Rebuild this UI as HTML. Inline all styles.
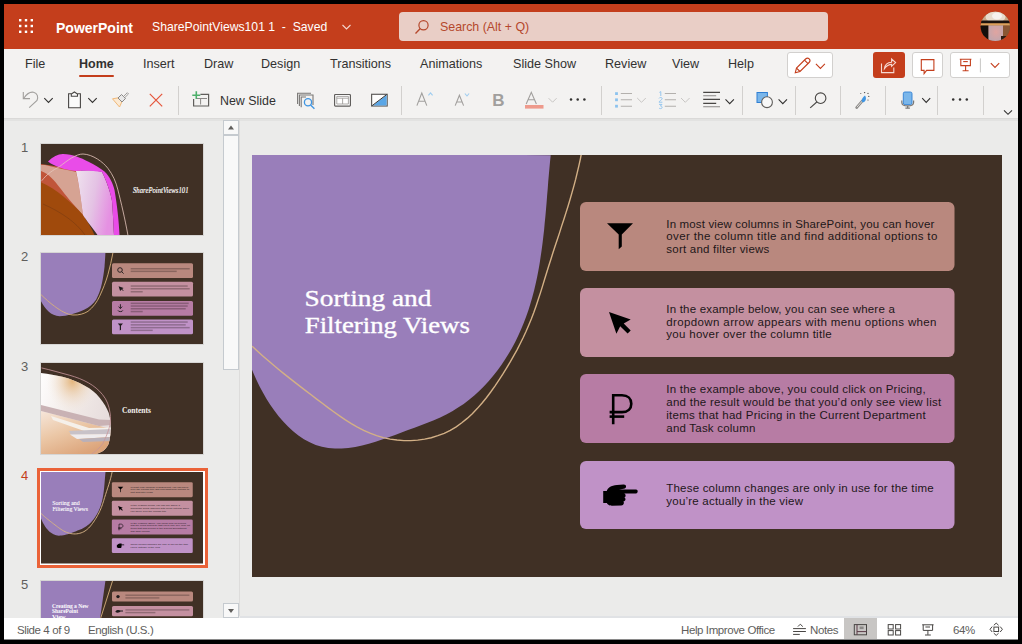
<!DOCTYPE html>
<html><head><meta charset="utf-8">
<style>
*{margin:0;padding:0;box-sizing:border-box}
html,body{width:1022px;height:644px;overflow:hidden;background:#000}
body{position:relative;font-family:"Liberation Sans",sans-serif}
.a{position:absolute}
.t{position:absolute;white-space:pre;line-height:1}
svg{overflow:hidden}
#app{position:absolute;left:4px;top:4px;width:1014px;height:636px;background:#ebebea;overflow:hidden}
#hdr{left:4px;top:4px;width:1014px;height:45px;background:#c43e1c}
#rib{left:4px;top:49px;width:1014px;height:69px;background:#f3f2f1}
.tab{font-size:12.6px;color:#323130;top:58px}
.btn{position:absolute;background:#fff;border:1px solid #d2d0ce;border-radius:3px}
.div{position:absolute;width:1px;background:#d2d0ce;top:86px;height:29px}
.st{font-size:11.5px;color:#605e5c;top:624.8px;letter-spacing:-0.4px}
.num{font-size:13px;color:#605e5c}
</style></head><body>
<div id="app"></div>
<div id="hdr" class="a"></div>
<svg class="a" style="left:18px;top:18px" width="16" height="16" viewBox="0 0 16 16">
<g fill="#fff"><rect x="1" y="1" width="2.4" height="2.4"/><rect x="6.8" y="1" width="2.4" height="2.4"/><rect x="12.6" y="1" width="2.4" height="2.4"/>
<rect x="1" y="6.8" width="2.4" height="2.4"/><rect x="6.8" y="6.8" width="2.4" height="2.4"/><rect x="12.6" y="6.8" width="2.4" height="2.4"/>
<rect x="1" y="12.6" width="2.4" height="2.4"/><rect x="6.8" y="12.6" width="2.4" height="2.4"/><rect x="12.6" y="12.6" width="2.4" height="2.4"/></g></svg>
<div class="t" style="left:56px;top:21px;font-size:14px;font-weight:700;color:#fff">PowerPoint</div>
<div class="t" style="left:152px;top:21px;font-size:12.2px;color:#fff">SharePointViews101 1  -  Saved</div>
<svg class="a" style="left:341px;top:23px" width="11" height="8" viewBox="0 0 11 8"><path d="M1.5 2 L5.5 6 L9.5 2" stroke="#f3d6cf" stroke-width="1.1" fill="none"/></svg>
<div class="a" style="left:399px;top:12px;width:429px;height:29px;background:#e9cec6;border-radius:4px"></div>
<svg class="a" style="left:414px;top:19px" width="16" height="16" viewBox="0 0 16 16"><circle cx="9.5" cy="6.2" r="4.6" stroke="#b5482c" stroke-width="1.2" fill="none"/><path d="M6.3 9.5 L1.5 14.5" stroke="#b5482c" stroke-width="1.3"/></svg>
<div class="t" style="left:440px;top:21px;font-size:12.4px;color:#b5482c">Search (Alt + Q)</div>
<svg class="a" style="left:980px;top:11px;filter:blur(0.35px)" width="31" height="31" viewBox="0 0 31 31">
<defs><clipPath id="av"><circle cx="15.3" cy="15.4" r="14.7"/></clipPath>
<radialGradient id="avf" cx="0.5" cy="0.4" r="0.6"><stop offset="0" stop-color="#e0a4a0"/><stop offset="1" stop-color="#bfa6ae"/></radialGradient></defs>
<g clip-path="url(#av)">
<rect width="31" height="31" fill="#7a4e30"/>
<rect x="0" y="0" width="31" height="10" fill="#c9a887"/>
<ellipse cx="15.5" cy="6" rx="10" ry="6" fill="#e8dccd"/>
<ellipse cx="17" cy="5" rx="5" ry="3.5" fill="#f6f2ee"/>
<rect x="0" y="9.5" width="31" height="3" fill="#1a120e"/>
<rect x="0" y="12.3" width="31" height="2.4" fill="#dca15c"/>
<rect x="0" y="14.5" width="8.5" height="17" fill="#140e0b"/>
<path d="M8.5,14.5 H23.5 V31 H8.5 Z" fill="url(#avf)"/>
<rect x="23" y="14.5" width="8" height="12" fill="#8a5634"/>
<rect x="21" y="25" width="10" height="6" fill="#2a1a12"/>
</g></svg>
<div id="rib" class="a"></div>
<div class="t tab" style="left:25px">File</div>
<div class="t tab" style="left:79px;font-weight:700;font-size:12.5px">Home</div>
<div class="a" style="left:79px;top:74.5px;width:35px;height:2.5px;background:#c43e1c;border-radius:1px"></div>
<div class="t tab" style="left:143px">Insert</div>
<div class="t tab" style="left:204px">Draw</div>
<div class="t tab" style="left:261px">Design</div>
<div class="t tab" style="left:330px">Transitions</div>
<div class="t tab" style="left:420px">Animations</div>
<div class="t tab" style="left:513px">Slide Show</div>
<div class="t tab" style="left:605px">Review</div>
<div class="t tab" style="left:672px">View</div>
<div class="t tab" style="left:728px">Help</div>
<div class="btn" style="left:787px;top:52px;width:46px;height:26px"></div>
<div class="a" style="left:873px;top:52px;width:32px;height:26px;background:#c43e1c;border-radius:3px"></div>
<div class="btn" style="left:912px;top:52px;width:31px;height:26px"></div>
<div class="btn" style="left:950px;top:52px;width:60px;height:26px"></div>
<div class="div" style="left:178px"></div>
<div class="div" style="left:401px"></div>
<div class="div" style="left:601px"></div>
<div class="div" style="left:742px"></div>
<div class="div" style="left:795px"></div>
<div class="div" style="left:840px"></div>
<div class="div" style="left:885px"></div>
<div class="div" style="left:937px"></div>
<div class="div" style="left:983px"></div>
<div class="t" style="left:220px;top:95px;font-size:12.4px;color:#323130">New Slide</div>
<svg class="a" style="left:0;top:0" width="1022" height="644" viewBox="0 0 1022 644">
<!-- undo (disabled) -->
<g fill="none" stroke="#a19f9d" stroke-width="1.1">
<path d="M23.3,92 V98.6 H30"/>
<path d="M23.8,98.2 C27,93.5 30.5,91.6 33.5,92.2 C37.5,93 38.5,97 37,100.5 L29.2,107.6"/>
</g>
<!-- chevrons dark -->
<g fill="none" stroke="#323130" stroke-width="1.1">
<path d="M44.3,98.2 L48.5,102.4 L52.7,98.2"/>
<path d="M88.3,98.2 L92.5,102.4 L96.7,98.2"/>
<path d="M725.5,99.4 L729.7,103.6 L733.9,99.4"/>
<path d="M778.6,99.4 L782.8,103.6 L787,99.4"/>
<path d="M922.2,98.2 L926.2,102.4 L930.2,98.2"/>
<path d="M1004,110.3 L1008,114.3 L1012,110.3"/>
</g>
<!-- clipboard -->
<g fill="none" stroke="#484644" stroke-width="1.1">
<path d="M71.5,93.8 H68.6 V107.8 H80.4 V93.8 H77.5" fill="#fafafa"/>
<path d="M71.3,96.3 V94 L74.4,92 L77.5,94 V96.3 Z" fill="#fafafa"/>
</g>
<!-- format painter -->
<g fill="none" stroke-width="1">
<path d="M112.5,98.8 L118.5,97.8 L122,101.4 L119.5,107 Z" stroke="#f0b97a" fill="#fbe9d2"/>
<path d="M118,98 L121.5,94.5 L125.5,98.5 L122,102 Z" stroke="#8a8886" fill="#e8e8e8"/>
<path d="M123.5,96.5 L127.3,92.7 L128.5,93.9 L124.7,97.7" stroke="#a19f9d"/>
</g>
<!-- delete X -->
<g stroke="#e5553b" stroke-width="1.2"><path d="M149.8,93.8 L162.2,106.3 M162.2,93.8 L149.8,106.3"/></g>
<!-- new slide -->
<g fill="none" stroke="#605e5c" stroke-width="1.2">
<path d="M193.6,99 V106 H208.6 V94.4 H200.4"/>
<path d="M196,98.5 H207 M200.6,98.5 V104.5" stroke="#8a8886" stroke-width="1"/>
</g>
<path d="M196.3,91.2 V99 M192.3,95.2 H200.3" stroke="#4caf6a" stroke-width="1.6"/>
<!-- reuse slides -->
<g fill="none" stroke="#797775" stroke-width="1.1">
<path d="M297.6,104 V93.2 H311"/>
<path d="M299.4,106 V95 H313 V105"/>
<path d="M301.2,107.3 V97 H306"/>
</g>
<g fill="none" stroke="#3f95e2" stroke-width="1.3"><circle cx="308" cy="102.3" r="3.6"/><path d="M310.6,105 L314.4,108.8"/></g>
<!-- layout -->
<rect x="334.6" y="94.5" width="15.8" height="11.6" rx="0.8" fill="#fff" stroke="#605e5c" stroke-width="1.2"/>
<path d="M336.8,96.4 H348.4 V104 H336.8 Z M336.8,98.2 H348.4 M342.6,98.2 V104" stroke="#a19f9d" stroke-width="0.9" fill="none"/>
<!-- format background -->
<rect x="371.6" y="94.3" width="15.6" height="11.7" fill="#fdfdfd" stroke="#605e5c" stroke-width="1.2"/>
<path d="M386.6,95 V105.4 H373 Z" fill="#5aa6e6"/>
<path d="M372.2,105.6 L386.6,94.6" stroke="#323130" stroke-width="1"/>
<!-- font size -->
<g fill="none" stroke="#a19f9d" stroke-width="1.1">
<path d="M416.9,105.6 L421.8,93 L426.8,105.6 M418.6,101.2 H425"/>
<path d="M455.2,105.6 L459.4,95.3 L463.6,105.6 M456.7,102 H462.2"/>
</g>
<g fill="none" stroke="#9fcdf0" stroke-width="1.1">
<path d="M428.4,95.4 L430.5,92.8 L432.6,95.4"/>
<path d="M464.9,93.5 L467,96 L469.1,93.5"/>
</g>
<!-- bold B -->
<text x="492.3" y="105.7" font-family="Liberation Sans" font-weight="700" font-size="17" fill="#a19f9d">B</text>
<!-- font color -->
<path d="M526.2,104 L531.3,92.3 L536.4,104 M527.9,99.8 H534.7" fill="none" stroke="#a19f9d" stroke-width="1.1"/>
<rect x="525" y="105" width="18.5" height="3.6" fill="#ee9a8c"/>
<path d="M548.6,98.2 L552.6,102.2 L556.6,98.2" fill="none" stroke="#c8c6c4" stroke-width="1"/>
<!-- more dots -->
<g fill="#323130"><circle cx="571" cy="99.6" r="1.25"/><circle cx="577.7" cy="99.6" r="1.25"/><circle cx="584.4" cy="99.6" r="1.25"/></g>
<!-- bullets -->
<g fill="#8cc2ee"><rect x="615.1" y="92.2" width="2.8" height="2.8"/><rect x="615.1" y="98.4" width="2.8" height="2.8"/><rect x="615.1" y="104.8" width="2.8" height="2.8"/></g>
<g stroke="#b3b0ad" stroke-width="1.1"><path d="M620.8,93.5 H632 M620.8,99.7 H632 M620.8,106.2 H632"/><path d="M664.8,93.5 H676 M664.8,99.7 H676 M664.8,106.2 H676"/></g>
<g fill="none" stroke="#c8c6c4" stroke-width="1"><path d="M637.2,98 L641.5,102.3 L645.8,98"/><path d="M681,98 L685.3,102.3 L689.6,98"/></g>
<g fill="none" stroke="#8cc2ee" stroke-width="0.9"><path d="M659.4,92.4 L660.8,91.6 V96"/><path d="M659,98.4 C659.4,97.2 662.2,97.2 662.2,98.6 C662.2,99.8 659,101 659,102.2 H662.4"/><path d="M659,104.4 H662 L660.4,106 C662.6,106 662.8,108.6 660.6,108.6 C659.8,108.6 659.2,108.3 659,108"/></g>
<!-- align -->
<g stroke="#484644" stroke-width="1.1"><path d="M703.2,92.4 H720 M703.2,99.4 H720 M703.2,103.4 H716.2"/></g>
<g stroke="#8a8886" stroke-width="1.1"><path d="M703.2,95.8 H716.2 M703.2,106.8 H720"/></g>
<!-- shapes -->
<rect x="757" y="92.5" width="10.4" height="10" fill="#7ab6ea" stroke="#2f7fd4" stroke-width="1"/>
<circle cx="767" cy="102.2" r="5.4" fill="#f8f8f8" stroke="#605e5c" stroke-width="1.1"/>
<!-- find -->
<g fill="none" stroke="#484644" stroke-width="1.1"><circle cx="820.6" cy="98.2" r="5.3"/><path d="M816.8,102 L810.2,107.8"/></g>
<!-- designer -->
<path d="M856.6,107.6 L862.6,100.6" stroke="#8a8886" stroke-width="2.6" stroke-linecap="round" fill="none"/>
<path d="M856.9,107.2 L862.4,100.9" stroke="#e8e6e4" stroke-width="0.9" fill="none"/>
<path d="M861.8,101.6 C861,99.4 863.2,96.8 865,95.4 C866.4,97.4 866.4,100.2 864.2,102 C863.3,102.6 862.3,102.3 861.8,101.6 Z" fill="#3f95e2"/>
<g fill="#484644"><circle cx="864.6" cy="92.6" r="0.7"/><circle cx="868" cy="93.4" r="0.6"/><circle cx="868.8" cy="96.4" r="0.6"/><circle cx="868" cy="100" r="0.6"/><circle cx="860.8" cy="93.4" r="0.5"/></g>
<!-- dictate -->
<rect x="903.3" y="92" width="8.7" height="12.6" rx="1.6" fill="#7ab6ea" stroke="#2f7fd4" stroke-width="0.9"/>
<path d="M901.8,100.6 V102.4 C901.8,104.8 903.6,105.9 907.65,105.9 C911.7,105.9 913.6,104.8 913.6,102.4 V100.6" fill="none" stroke="#797775" stroke-width="1.2"/>
<path d="M907.65,105.9 V108.2 M905.4,108.2 H909.9" stroke="#797775" stroke-width="1.2"/>
<g fill="#323130"><circle cx="953.2" cy="99.5" r="1.25"/><circle cx="960" cy="99.5" r="1.25"/><circle cx="966.8" cy="99.5" r="1.25"/></g>
</svg>


<div class="a" style="left:4px;top:118px;width:1014px;height:1px;background:#dad9d8"></div><div class="a" style="left:4px;top:119px;width:1014px;height:1.5px;background:#e2e2e1"></div>
<svg id="mainslide" class="a" style="left:252px;top:155px" width="750" height="422" viewBox="0 0 750 422">
<g id="s4">
<rect width="750" height="422" fill="#403025"/>
<path d="M-2,-2 L298.7,0.2 L298.0,6.9 L297.4,13.6 L296.8,20.3 L296.2,27.1 L295.7,33.9 L295.1,40.7 L294.6,47.5 L294.0,54.4 L293.4,61.2 L292.7,68.0 L292.1,74.9 L291.3,81.7 L290.5,88.5 L289.6,95.3 L288.6,102.1 L287.6,108.8 L286.4,115.6 L285.1,122.3 L283.6,129.0 L282.1,135.6 L280.3,142.2 L278.4,148.8 L276.4,155.3 L274.1,161.7 L271.7,168.1 L269.0,174.5 L266.2,180.7 L263.2,186.9 L260.0,192.9 L256.6,198.8 L253.0,204.6 L249.2,210.3 L245.2,215.8 L241.0,221.1 L236.6,226.3 L232.0,231.2 L227.2,236.0 L222.3,240.5 L217.1,244.8 L211.7,248.9 L206.1,252.6 L200.3,256.2 L194.3,259.4 L188.2,262.4 L181.9,265.2 L175.5,267.8 L169.0,270.3 L162.5,272.8 L156.0,275.1 L149.5,277.5 L143.1,280.0 L136.6,282.3 L130.1,284.6 L123.6,286.8 L116.9,288.8 L110.1,290.5 L103.3,291.9 L96.4,292.9 L89.6,293.4 L82.9,293.5 L76.3,292.9 L69.9,291.8 L63.7,289.9 L57.7,287.3 L51.9,284.2 L46.4,280.5 L41.1,276.2 L36.0,271.6 L31.2,266.6 L26.6,261.2 L22.3,255.6 L18.2,249.7 L14.4,243.7 L10.9,237.6 L7.6,231.5 L4.6,225.3 L1.9,219.2 L-0.6,213.3 L-2.7,207.5 L-2,207.5 Z" fill="#997eba"/>
<rect x="328" y="47" width="374.5" height="69" rx="6" fill="#b9887e"/>
<rect x="328" y="133" width="374.5" height="69" rx="6" fill="#c490a0"/>
<rect x="328" y="219" width="374.5" height="69" rx="6" fill="#b77ca4"/>
<rect x="328" y="306" width="374.5" height="68" rx="6" fill="#c092c7"/>
<g font-family="Liberation Serif" font-size="23.4" fill="#fff" stroke="#fff" stroke-width="0.35">
<text x="52.5" y="151.2" textLength="127" lengthAdjust="spacingAndGlyphs">Sorting and</text>
<text x="52.8" y="178.4" textLength="165" lengthAdjust="spacingAndGlyphs">Filtering Views</text>
</g>
<g font-family="Liberation Sans" font-size="11.5" fill="#1e1719">
<text x="414.3" y="72.6" textLength="268" lengthAdjust="spacing">In most view columns in SharePoint, you can hover</text>
<text x="414.3" y="85.2" textLength="271" lengthAdjust="spacing">over the column title and find additional options to</text>
<text x="414.3" y="97.6" textLength="103" lengthAdjust="spacing">sort and filter views</text>
<text x="414.3" y="158.2" textLength="228.5" lengthAdjust="spacing">In the example below, you can see where a</text>
<text x="414.3" y="170.8" textLength="270.2" lengthAdjust="spacing">dropdown arrow appears with menu options when</text>
<text x="414.3" y="183.4" textLength="165.4" lengthAdjust="spacing">you hover over the column title</text>
<text x="414.3" y="238.4" textLength="259.3" lengthAdjust="spacing">In the example above, you could click on Pricing,</text>
<text x="414.3" y="251.1" textLength="274.9" lengthAdjust="spacing">and the result would be that you’d only see view list</text>
<text x="414.3" y="263.8" textLength="259.3" lengthAdjust="spacing">items that had Pricing in the Current Department</text>
<text x="414.3" y="276.5" textLength="89.1" lengthAdjust="spacing">and Task column</text>
<text x="414.3" y="337" textLength="267.3" lengthAdjust="spacing">These column changes are only in use for the time</text>
<text x="414.3" y="349.7" textLength="136.7" lengthAdjust="spacing">you’re actually in the view</text>
</g>
<g fill="#000">
<path d="M355,68.3 L381,68.3 L369.8,79.5 L369.8,91.5 L366.7,94.3 L366.7,79.5 Z"/>
<path d="M357,157 L378.7,164.4 L371.7,168.6 L378.7,175.6 L375.6,178.5 L368.2,171.2 L364.4,178.7 Z"/>
<path d="M351.2,336 h4 v12 h-4 Z M354.5,337 C355.5,332.5 359,330.5 365,330 L371.5,329.4 C374.8,329.2 375,333.2 371.8,333.8 L367,334.6 L384,334.6 C386.3,334.6 386.3,338.4 384,338.4 L372,338.4 C374.2,338.8 374.2,342.2 372,342.6 C374.2,343 374,346.2 371.3,346.6 C372.3,347.2 372.2,350.4 369.2,350.6 L360,350.7 C356.8,350.7 354.6,349 354.6,346.5 Z"/>
</g>
<g fill="none" stroke="#000" stroke-width="2.6">
<path d="M361.2,269.2 V240.3 H370 C376,240.3 379.3,243.8 379.3,248.7 C379.3,253.6 376,257.1 370,257.1 H357.6"/>
<path d="M357.6,261.6 H372.2"/>
</g>
</g>
<g stroke-width="1.4"><path id="goldp" d="M0.1,191.2 L5.3,196.0 L10.5,200.7 L15.8,205.3 L21.1,209.8 L26.4,214.2 L31.8,218.6 L37.2,222.9 L42.6,227.1 L48.1,231.4 L53.6,235.6 L59.1,239.8 L64.7,244.1 L70.3,248.3 L76.0,252.6 L81.7,256.8 L87.5,260.9 L93.4,264.9 L99.3,268.7 L105.4,272.2 L111.7,275.4 L118.0,278.2 L124.6,280.6 L131.3,282.6 L138.1,284.1 L145.0,285.0 L151.9,285.6 L158.8,285.6 L165.7,285.1 L172.6,284.1 L179.3,282.7 L185.8,280.7 L192.2,278.3 L198.3,275.3 L204.2,271.8 L209.8,267.8 L215.2,263.4 L220.3,258.7 L225.2,253.6 L229.9,248.3 L234.4,242.7 L238.7,237.0 L242.9,231.1 L246.9,225.2 L250.8,219.2 L254.5,213.2 L258.1,207.2 L261.5,201.2 L264.9,195.1 L268.0,189.0 L271.1,182.8 L274.0,176.5 L276.7,170.2 L279.3,163.9 L281.8,157.4 L284.1,150.9 L286.3,144.3 L288.5,137.6 L290.6,130.9 L292.6,124.2 L294.7,117.5 L296.8,110.8 L298.9,104.2 L301.0,97.5 L303.2,90.8 L305.4,84.2 L307.6,77.6 L309.7,70.9 L311.9,64.3 L314.0,57.6 L316.1,51.0 L318.1,44.3 L320.0,37.6 L321.9,30.9 L323.7,24.2 L325.3,17.4 L326.9,10.6 L328.4,3.8 L329.7,-3.1 L330.8,-10.1" fill="none" stroke="#d3b086"/></g>
</svg>

<!-- slide numbers -->
<div class="t num" style="left:21px;top:141px">1</div>
<div class="t num" style="left:21px;top:250px">2</div>
<div class="t num" style="left:21px;top:359.5px">3</div>
<div class="t num" style="left:21px;top:469px;color:#c43e1c">4</div>
<div class="t num" style="left:21px;top:578px">5</div>
<!-- scrollbar -->
<div class="a" style="left:239px;top:119px;width:1px;height:497px;background:#dddcdb"></div>
<div class="a" style="left:223px;top:119.5px;width:16px;height:15px;background:#f8f8f8;border:1px solid #c5cacf"></div>
<svg class="a" style="left:223px;top:119px" width="16" height="16"><path d="M5,10.5 L8,6.5 L11,10.5 Z" fill="#605e5c"/></svg>
<div class="a" style="left:223px;top:135px;width:16px;height:235px;background:#f8f8f8;border:1px solid #c5cacf"></div>
<div class="a" style="left:223px;top:603px;width:16px;height:15px;background:#f8f8f8;border:1px solid #c5cacf"></div>
<svg class="a" style="left:223px;top:602.5px" width="16" height="16"><path d="M5,6 L8,10 L11,6 Z" fill="#605e5c"/></svg>
<div id="thumbclip" class="a" style="left:0;top:119px;width:222px;height:499px;overflow:hidden">
<!-- thumb frames -->
<div class="a" style="left:40px;top:24px;width:164px;height:93px;border:1px solid #d6d5d4"></div>
<div class="a" style="left:40px;top:133.3px;width:164px;height:93px;border:1px solid #d6d5d4"></div>
<div class="a" style="left:40px;top:242.6px;width:164px;height:93px;border:1px solid #d6d5d4"></div>
<div class="a" style="left:37px;top:348.5px;width:171px;height:100.5px;border:3px solid #ea6238;background:#fff"></div>
<div class="a" style="left:40px;top:461px;width:164px;height:93px;border:1px solid #d6d5d4"></div>
<!-- thumb 1 -->
<svg class="a" style="left:41px;top:25px" width="162" height="91" viewBox="0 0 162 91">
<defs><linearGradient id="pk" x1="0" y1="0" x2="1" y2="0.3"><stop offset="0" stop-color="#efe2ee"/><stop offset="0.55" stop-color="#e4c2e4"/><stop offset="1" stop-color="#e590e2"/></linearGradient></defs>
<rect width="162" height="91" fill="#403025"/>
<path d="M0,20 L40,26 L44,75 L0,55 Z" fill="#c0553a"/>
<path d="M4,21 C15,24 28,26 35,28 C38,40 40,56 42,71 C32,60 25,52 19.5,44.5 C13,36 8,30 0,27 V21 Z" fill="#d6a393"/>
<path d="M0,38.3 C15,45 30,58 42,71 C47,78 51,85 53.5,91 L0,91 Z" fill="#a04a0c"/>
<path d="M2,60 C20,68 35,78 44,91" fill="none" stroke="#7a3a10" stroke-width="0.6"/>
<path d="M35,27 C45,26 55,26 61,28 C66,38 70,50 71,57 C72,70 72.5,82 73,91 L56.5,91 C51,83 45,76 42,71 C40,56 38,40 35,27 Z" fill="url(#pk)"/>
<path d="M7,17.6 C12,12.5 17,10 22,10.1 C32,10.5 40,14 47,17.6 C54,21 59,24 63.5,27.6 C69,33 72,40 73.5,45.9 C76,60 78,78 78.5,91 L73,91 C72.5,82 72,70 71,57 C70,50 66,38 61,28 C52,26.5 42,26.5 35,27 C24,26 14,23 7,17.6 Z" fill="#e94ce8"/>
<path d="M0.7,36.8 C6,30 12,26 18.6,22.6 C27,16 35,10 42,10 C52,10.5 62,18 66.9,24.3 C72,31 75,38 76.9,45.9 C80,58 84,75 86.9,91" fill="none" stroke="#e6c6bc" stroke-width="0.8"/>
<text x="92" y="49" font-family="Liberation Serif" font-style="italic" font-size="7.4" fill="#fff" stroke="#fff" stroke-width="0.15" textLength="55.5" lengthAdjust="spacingAndGlyphs">SharePointViews101</text>
</svg>
<!-- thumb 2 -->
<svg class="a" style="left:41px;top:134.3px" width="162" height="91" viewBox="0 0 162 91">
<rect width="162" height="91" fill="#403025"/>
<path d="M0,0 H64.4 C64,8 63.6,13.3 63.6,13.3 C62.8,20 62,26 61,30 C59.5,37 57.5,42 55.2,46.6 C52,51.5 48,54.5 43.6,56.6 C35,60.5 26,63.3 18.6,63.3 C10,63 4,56 0,48.3 Z" fill="#997eba"/>
<path d="M0,41.6 C4,45.5 9,50 13.6,53.3 C20,58 26,61.5 32,62 C38,62.3 43,60.8 47,58.3 C52,54.5 56,49 58.6,43.3 C62,36 64.8,29 66.9,21.7 C69,14 70.6,7 71.9,0" fill="none" stroke="#d6b07c" stroke-width="0.9"/>
<rect x="71" y="10.3" width="81" height="14.7" rx="1.5" fill="#b9887e"/>
<rect x="71" y="28.8" width="81" height="14.8" rx="1.5" fill="#c490a0"/>
<rect x="71" y="48" width="81" height="14.8" rx="1.5" fill="#b77ca4"/>
<rect x="71" y="66.6" width="81" height="14.6" rx="1.5" fill="#c092c7"/>
<g fill="none" stroke="#1f1a1c" stroke-width="0.9"><circle cx="79" cy="17" r="2.3"/><path d="M80.6,18.6 L82.6,20.6"/></g>
<path d="M77.6,33.3 L82.6,35 L81.1,36 L82.6,37.5 L82.1,38 L80.6,36.6 L79.1,38 Z" fill="#1f1a1c"/>
<path d="M79.4,51.2 V55.4 M77.6,53.6 L79.4,55.6 L81.2,53.6 M77,57.4 C77,59 81.8,59 81.8,57.4" stroke="#1f1a1c" stroke-width="0.9" fill="none"/>
<path d="M76.8,70.5 H82 L80,72.8 V76.8 L78.8,77.4 V72.8 Z" fill="#1f1a1c"/>
<g fill="#2a1e1e" opacity="0.32">
<rect x="89.7" y="15" width="59" height="1.5"/><rect x="89.7" y="17.6" width="46" height="1.5"/>
<rect x="89.7" y="32.3" width="57" height="1.5"/><rect x="89.7" y="35" width="59" height="1.5"/><rect x="89.7" y="38" width="12" height="1.5"/>
<rect x="89.7" y="49.6" width="58" height="1.5"/><rect x="89.7" y="52.3" width="57" height="1.5"/><rect x="89.7" y="55" width="55" height="1.5"/><rect x="89.7" y="57.8" width="12" height="1.5"/>
<rect x="89.7" y="68.3" width="57" height="1.5"/><rect x="89.7" y="71.1" width="55" height="1.5"/><rect x="89.7" y="73.9" width="59" height="1.5"/><rect x="89.7" y="76.6" width="22" height="1.5"/>
</g>
</svg>
<!-- thumb 3 -->
<svg class="a" style="left:41px;top:243.6px" width="162" height="91" viewBox="0 0 162 91">
<defs>
<clipPath id="bc"><path d="M0,10.1 C8,11 15,12.5 21.4,13.8 C30,16 37,19 43.7,22.7 C50,26 55,30 58.6,34.7 C63,40 66,45 67.6,49.6 C69,54 70,59 69.8,64.5 C69.6,70 69,76 67.6,80.9 C66,84 64,86.5 61.6,88.3 C59.5,89.5 57.5,90.3 55.6,91 H0 Z"/></clipPath>
<radialGradient id="tan1" cx="0.42" cy="0.2" r="0.35"><stop offset="0" stop-color="#e4b57c"/><stop offset="1" stop-color="#f4ece6" stop-opacity="0"/></radialGradient>
<linearGradient id="wh" x1="0" y1="0" x2="1" y2="0.4"><stop offset="0" stop-color="#ffffff"/><stop offset="0.5" stop-color="#f2ebe8"/><stop offset="1" stop-color="#e6dcdc"/></linearGradient>
<linearGradient id="tan2" x1="0" y1="0" x2="0.6" y2="1"><stop offset="0" stop-color="#f6e6da"/><stop offset="0.5" stop-color="#ebc7a6"/><stop offset="1" stop-color="#dca47a"/></linearGradient>
</defs>
<rect width="162" height="91" fill="#403025"/>
<g clip-path="url(#bc)">
<rect width="75" height="91" fill="url(#wh)"/>
<rect width="75" height="91" fill="url(#tan1)"/>
<path d="M0,48 L70,66 V91 H0 Z" fill="url(#tan2)"/>
<path d="M0,42 L58,56.5 L70,57 V62 L58,63 L0,48 Z" fill="#c9b2b4"/>
<path d="M10,53 L48,65 L70,64.5 V67 L46,69 L12,57 Z" fill="#f5f0ea"/>
<path d="M28,68 L70,66 V71 L30,72 Z" fill="#c8c2c8"/>
<path d="M29,71.5 L70,71 V74 L36,76 Z" fill="#efecee"/>
<path d="M38,76 L70,74 V78 L42,79 Z" fill="#b9b0b8"/>
</g>
<path d="M0.5,4.9 C10,7 20,10 28.8,12.3 C42,16 54,22 61.6,31.7 C66,37 68,43 69,49.6 C70,55 69.5,60 68.3,64.5 C66.5,71 64,76 61.6,80.9 C57,87 52,90 48.2,92.8" fill="none" stroke="#c8959a" stroke-width="0.8"/>
<text x="81" y="50" font-family="Liberation Serif" font-weight="700" font-size="7.3" fill="#f4f0ec" textLength="29" lengthAdjust="spacingAndGlyphs">Contents</text>
</svg>
<!-- thumb 4: scaled main slide -->
<svg class="a" style="left:41px;top:353px" width="162" height="91.5" viewBox="0 0 750 422" preserveAspectRatio="none"><use href="#s4"/><use href="#goldp" stroke-width="4.5"/></svg>
<!-- thumb 5 -->
<svg class="a" style="left:41px;top:462.2px" width="162" height="91" viewBox="0 0 162 91">
<rect width="162" height="91" fill="#403025"/>
<path d="M0,0 H64.4 L58,45 L55,91 H0 Z" fill="#997eba"/>
<path d="M71.5,0 L59.9,36.4 L50,91" fill="none" stroke="#d6b07c" stroke-width="0.9"/>
<rect x="71" y="10.6" width="81" height="10" rx="1.5" fill="#b9887e"/>
<rect x="71" y="25.1" width="81" height="10.1" rx="1.5" fill="#c490a0"/>
<circle cx="77" cy="15.6" r="1.7" fill="#1f1a1c"/>
<path d="M74.5,30.2 C75.5,28.6 78.5,28.6 79.5,29.6 H82 V30.6 H79.5 C78.5,32 75.5,32 74.5,31 Z" fill="#1f1a1c"/>
<g fill="#2a1e1e" opacity="0.32"><rect x="84.4" y="13.5" width="64" height="1.4"/><rect x="84.4" y="16.2" width="34" height="1.4"/><rect x="84.4" y="28.2" width="64" height="1.4"/><rect x="84.4" y="30.9" width="30" height="1.4"/></g>
<g font-family="Liberation Serif" font-weight="700" font-size="6.4" fill="#fff"><text x="11" y="26.7" textLength="36.6" lengthAdjust="spacingAndGlyphs">Creating a New</text><text x="11" y="32.2" textLength="26" lengthAdjust="spacingAndGlyphs">SharePoint</text><text x="11" y="37.7">View</text></g>
</svg>
</div>

<div class="a" style="left:240px;top:615.5px;width:778px;height:2.5px;background:#e0e2e5"></div>
<div class="a" style="left:4px;top:618px;width:1014px;height:22px;background:#fff"></div>
<div class="t st" style="left:17px">Slide 4 of 9</div>
<div class="t st" style="left:88px">English (U.S.)</div>
<div class="t st" style="left:681px">Help Improve Office</div>
<div class="t st" style="left:810px">Notes</div>
<div class="a" style="left:844px;top:618px;width:33px;height:22px;background:#c8c6c4"></div>
<div class="t st" style="left:953px">64%</div>
<svg class="a" style="left:0;top:0" width="1022" height="644" viewBox="0 0 1022 644">
<!-- pencil -->
<g fill="none" stroke="#c43e1c" stroke-width="1.1">
<path d="M795.3,72.7 L796.5,68.1 L805.6,59 C806.6,58 808.3,58 809.2,58.9 C810.1,59.8 810.1,61.5 809.1,62.5 L800,71.5 Z"/>
<path d="M796.5,68.1 L800,71.5 M804.5,60.1 L808,63.6"/>
<path d="M815.9,63.9 L820.4,68.4 L824.9,63.9"/>
</g>
<!-- share (white on orange) -->
<g fill="none" stroke="#f6d9d1" stroke-width="1.1">
<path d="M881.5,63.4 V72.6 H893.8 V67.6"/>
<path d="M884.4,68.8 C884.8,64.6 887.4,62.4 891.6,62.2 L891.6,59 L895.6,62.6 L891.6,66.3 L891.6,64.4 C888.4,64.4 886.4,66 884.4,68.8 Z"/>
</g>
<!-- comment -->
<path d="M921.3,59.6 H933.9 V70.4 H926.6 L924.1,73.6 V70.4 H921.3 Z" fill="none" stroke="#c43e1c" stroke-width="1.1"/>
<!-- present -->
<g fill="none" stroke="#c43e1c" stroke-width="1.1">
<path d="M959.8,59.2 H971.4 M960.8,59.4 V65.6 H970.4 V59.4 M965.6,65.6 V70.6 M962.6,70.8 H968.6"/>
<path d="M963.2,61.6 H967.8"/>
</g>
<path d="M980.4,58.4 V72.4" stroke="#c8c6c4" stroke-width="1"/>
<path d="M990.8,63.2 L995,67.4 L999.2,63.2" fill="none" stroke="#c43e1c" stroke-width="1.1"/>
<!-- status bar icons -->
<g fill="none" stroke="#484644" stroke-width="1">
<path d="M793.1,628.6 H805.9 M793.1,631.5 H805.9 M793.1,634.4 H799.8 M797.9,626.6 L800.3,624.2 L802.8,626.6"/>
<rect x="854.3" y="624.6" width="12.2" height="10.2"/>
<path d="M857,624.6 V634.8 M857,631.6 H866.5" stroke="#5b3a46"/>
<rect x="859.6" y="626.5" width="4" height="2.6" fill="#8a8886" stroke="none"/>
<rect x="888.2" y="624.6" width="5" height="4.4"/><rect x="895.6" y="624.6" width="5" height="4.4"/>
<rect x="888.2" y="630.6" width="5" height="4.4"/><rect x="895.6" y="630.6" width="5" height="4.4"/>
<path d="M922.2,624.8 H933.6 M923.2,624.8 V630.4 H932.6 V624.8 M927.9,630.4 V634.8 M925,635 H930.8 M925.4,627 H930"/>
<path d="M992.2,626.6 L990,629.3 L992.2,632 M1000.2,626.6 L1002.4,629.3 L1000.2,632 M993.8,625.3 L996.2,623.1 L998.6,625.3 M993.8,633.2 L996.2,635.4 L998.6,633.2"/>
<rect x="993.9" y="627.1" width="4.7" height="4.4"/>
</g>
</svg>

<div class="a" style="left:4px;top:639px;width:1014px;height:1px;background:#8a8a8a"></div>
</body></html>
